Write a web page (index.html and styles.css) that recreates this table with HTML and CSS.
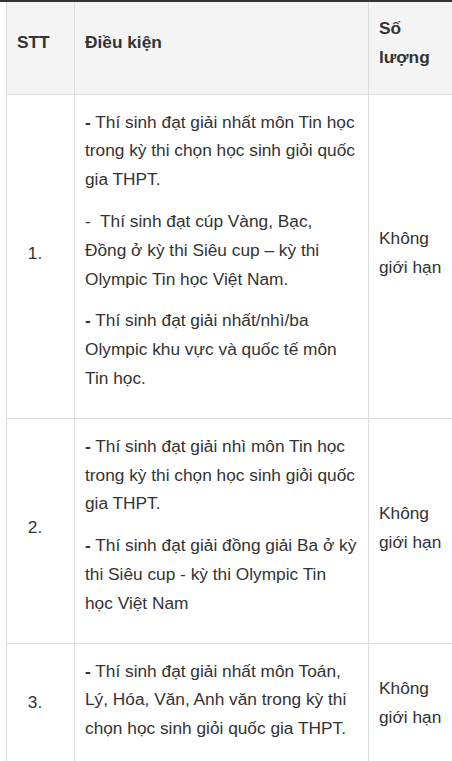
FILE: index.html
```html
<!DOCTYPE html>
<html lang="vi">
<head>
<meta charset="utf-8">
<link rel="stylesheet" href="styles.css">
</head>
<body>
<div class="topbar"></div>
<div class="wrap">
<table class="tbl">
  <colgroup>
    <col class="c1">
    <col class="c2">
    <col class="c3">
  </colgroup>
  <thead>
    <tr>
      <th>STT</th>
      <th>Điều kiện</th>
      <th>Số lượng</th>
    </tr>
  </thead>
  <tbody>
    <tr>
      <td class="num">1.</td>
      <td class="cond">
        <p><strong>-</strong> Thí sinh đạt giải nhất môn Tin học<br>trong kỳ thi chọn học sinh giỏi quốc<br>gia THPT.</p>
        <p>-&nbsp; Thí sinh đạt cúp Vàng, Bạc,<br>Đồng ở kỳ thi Siêu cup – kỳ thi<br>Olympic Tin học Việt Nam.</p>
        <p><strong>-</strong> Thí sinh đạt giải nhất/nhì/ba<br>Olympic khu vực và quốc tế môn<br>Tin học.</p>
      </td>
      <td class="qty">Không giới hạn</td>
    </tr>
    <tr>
      <td class="num">2.</td>
      <td class="cond">
        <p><strong>-</strong> Thí sinh đạt giải nhì môn Tin học<br>trong kỳ thi chọn học sinh giỏi quốc<br>gia THPT.</p>
        <p><strong>-</strong> Thí sinh đạt giải đồng giải Ba ở kỳ<br>thi Siêu cup - kỳ thi Olympic Tin<br>học Việt Nam</p>
      </td>
      <td class="qty">Không giới hạn</td>
    </tr>
    <tr>
      <td class="num">3.</td>
      <td class="cond">
        <p><strong>-</strong> Thí sinh đạt giải nhất môn Toán,<br>Lý, Hóa, Văn, Anh văn trong kỳ thi<br>chọn học sinh giỏi quốc gia THPT.</p>
      </td>
      <td class="qty">Không giới hạn</td>
    </tr>
  </tbody>
</table>
</div>
</body>
</html>
```

FILE: styles.css
```css
html, body {
  margin: 0;
  padding: 0;
  background: #fff;
  overflow: hidden;
}

body {
  font-family: "Liberation Sans", Arial, sans-serif;
  font-size: 17.3px;
  line-height: 28.8px;
  color: #333;
}

.topbar {
  height: 2px;
  background: #333;
}

.wrap {
  padding-left: 6px;
  overflow: hidden;
}

.tbl {
  border-collapse: collapse;
  table-layout: fixed;
  width: 454px;
}

.c1 { width: 68px; }
.c2 { width: 294px; }
.c3 { width: 92px; }

.tbl th,
.tbl td {
  border: 1px solid #ddd;
}

.tbl th {
  background: #f4f4f4;
  font-weight: bold;
  text-align: left;
  vertical-align: middle;
  padding: 12px 10px 22px;
  border-top: 0;
}

.tbl td {
  vertical-align: middle;
  padding: 13px 10px 19px;
}

.tbl td.cond {
  vertical-align: top;
  padding: 13px 10px 12px;
}

.cond p {
  margin: 0 0 13px;
  white-space: nowrap;
}

.tbl td.num {
  text-align: center;
  padding-right: 21px;
}

.tbl td.qty {
  padding-right: 14px;
}

strong {
  font-weight: bold;
}
```
